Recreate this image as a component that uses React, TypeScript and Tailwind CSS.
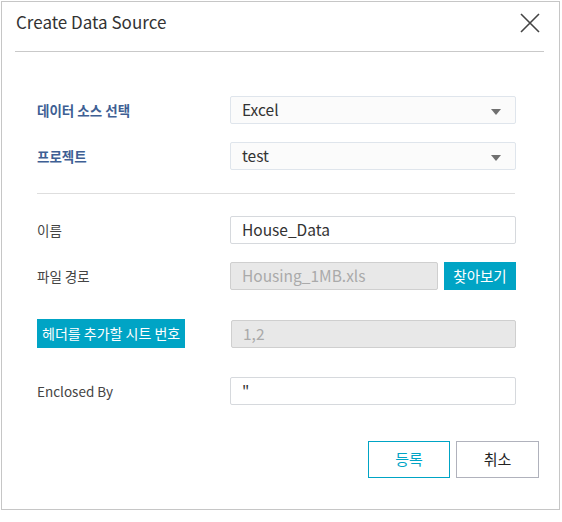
import React from "react";

const font = { fontFamily: '"Noto Sans CJK KR", "Noto Sans", sans-serif' };

function Caret() {
  return (
    <svg width="10" height="6" viewBox="0 0 10 6" className="absolute right-[14px] top-[12px]">
      <path d="M0 0 L10 0 L5 6 Z" fill="#707070" />
    </svg>
  );
}

export default function App() {
  return (
    <div className="pl-[1px] pt-[1px] bg-white" style={font}>
      <div className="w-[559px] h-[509px] border border-[#c6c6c6] bg-white flex flex-col">
        <div className="h-[50px] mx-[13px] mr-[15px] border-b border-[#c9c9c9] flex items-center justify-between">
          <div className="text-[17px] text-[#333] pl-[1px] pb-[9px]">Create Data Source</div>
          <svg width="20" height="20" viewBox="0 0 20 20" className="mr-[4px] mb-[8px]">
            <path d="M1 1 L19 19 M19 1 L1 19" stroke="#444" strokeWidth="1.6" />
          </svg>
        </div>
        <div className="pl-[35px] pr-[43px] pt-[44px] flex flex-col">
          <div className="flex items-center h-[28px]">
            <div className="w-[193px] text-[13.5px] font-bold text-[#3e5f94]">데이터 소스 선택</div>
            <div className="relative flex-1 h-[28px] border border-[#dfe5ec] rounded-[2px] bg-[#fbfbfb] flex items-center pl-[11px] text-[15.5px] text-[#333]">
              Excel
              <Caret />
            </div>
          </div>
          <div className="flex items-center h-[28px] mt-[18px]">
            <div className="w-[193px] text-[13.5px] font-bold text-[#3e5f94]">프로젝트</div>
            <div className="relative flex-1 h-[28px] border border-[#dfe5ec] rounded-[2px] bg-[#fbfbfb] flex items-center pl-[11px] text-[15.5px] text-[#333]">
              test
              <Caret />
            </div>
          </div>
          <div className="h-px bg-[#dedede] mt-[23px] mr-[1px]" />
          <div className="flex items-center h-[28px] mt-[22px]">
            <div className="w-[193px] text-[13.5px] text-[#444]">이름</div>
            <div className="flex-1 h-[28px] border border-[#d6d9dd] rounded-[2px] bg-white flex items-center pl-[11px] text-[15.5px] text-[#333]">
              House_Data
            </div>
          </div>
          <div className="flex items-center h-[28px] mt-[18px]">
            <div className="w-[193px] text-[13.5px] text-[#444]">파일 경로</div>
            <div className="w-[208px] h-[28px] border border-[#cfcfcf] rounded-[2px] bg-[#e8e8e8] flex items-center pl-[11px] text-[15.5px] text-[#aaa]">
              Housing_1MB.xls
            </div>
            <div className="ml-[6px] flex-1 h-[28px] bg-[#00a4c5] text-white text-[14.5px] flex items-center justify-center">
              찾아보기
            </div>
          </div>
          <div className="flex items-center h-[29px] mt-[29px]">
            <div className="w-[194px]">
              <span className="inline-flex items-center h-[29px] px-[5px] bg-[#00a4c5] text-white text-[14px]">
                헤더를 추가할 시트 번호
              </span>
            </div>
            <div className="flex-1 h-[28px] border border-[#cfcfcf] rounded-[2px] bg-[#e8e8e8] flex items-center pl-[11px] text-[15.5px] text-[#aaa]">
              1,2
            </div>
          </div>
          <div className="flex items-center h-[28px] mt-[29px]">
            <div className="w-[193px] text-[13.5px] text-[#444]">Enclosed By</div>
            <div className="flex-1 h-[28px] border border-[#d6d9dd] rounded-[2px] bg-white flex items-center pl-[11px] text-[15.5px] text-[#333]">
              "
            </div>
          </div>
        </div>
        <div className="flex justify-end gap-[6px] mt-[36px] pr-[20px]">
          <div className="w-[82px] h-[37px] border border-[#00a4c5] text-[#00a4c5] text-[15px] flex items-center justify-center">
            등록
          </div>
          <div className="w-[83px] h-[37px] border border-[#b0b2bc] text-[#222] text-[15px] flex items-center justify-center">
            취소
          </div>
        </div>
      </div>
    </div>
  );
}
